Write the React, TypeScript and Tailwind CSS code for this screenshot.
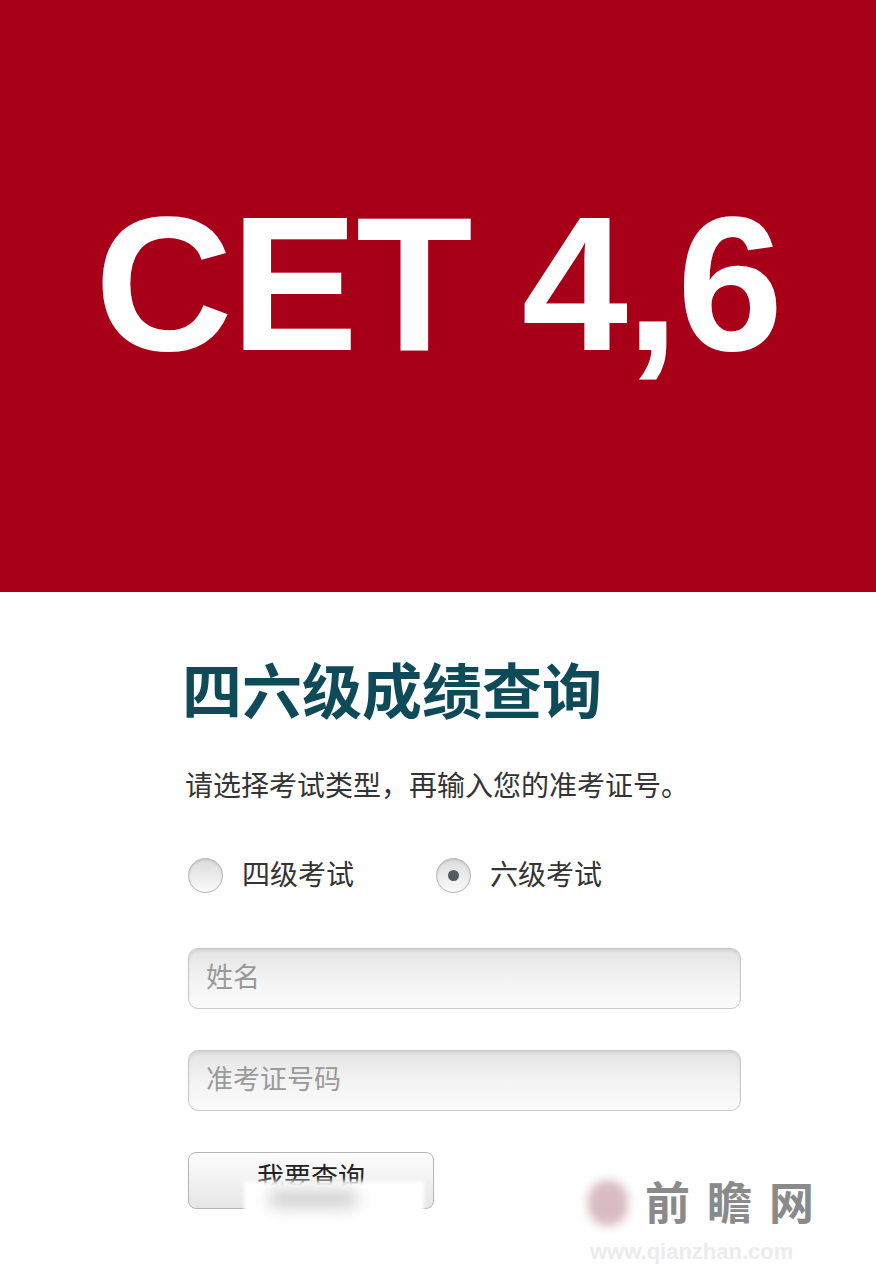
import React from "react";

const cjk = "font-['Liberation_Sans','Noto_Sans_CJK_SC',sans-serif]";

function Radio({ label, checked }: { label: string; checked?: boolean }) {
  return (
    <label className="flex items-center gap-[19px]">
      <span className="flex h-[35px] w-[35px] items-center justify-center rounded-full border border-[#b8b8b8] bg-gradient-to-b from-[#dcdcdc] to-[#fafafa] shadow-[inset_0_1px_2px_rgba(0,0,0,0.15)]">
        {checked && <span className="h-[11px] w-[11px] rounded-full bg-[#555a60]" />}
      </span>
      <span className="text-[28px] leading-none text-[#333]">{label}</span>
    </label>
  );
}

function Field({ placeholder }: { placeholder: string }) {
  return (
    <div className="flex h-[61px] w-[553px] items-center rounded-[10px] border border-[#c9c9c9] bg-gradient-to-b from-[#e4e4e4] via-[#f3f3f3] to-[#fbfbfb] px-[17px] shadow-[inset_0_2px_3px_rgba(0,0,0,0.08)]">
      <span className="text-[27px] leading-none text-[#9a9a9a]">{placeholder}</span>
    </div>
  );
}

export default function App() {
  return (
    <div className={`relative min-h-[1280px] w-[876px] overflow-hidden bg-white ${cjk}`}>
      <div className="flex h-[592px] items-center justify-center bg-[#a9001a] pb-[26px]">
        <div className="font-['Liberation_Sans',sans-serif] text-[191px] font-bold leading-none tracking-[-2px] text-white">
          CET 4,6
        </div>
      </div>

      <div className="flex flex-col pl-[182px] pt-[72px]">
        <h1 className="text-[60px] font-bold leading-none text-[#0f4a58]">四六级成绩查询</h1>
        <p className="mt-[49px] pl-[3px] text-[28px] leading-none text-[#333]">
          请选择考试类型，再输入您的准考证号。
        </p>
        <div className="mt-[57px] flex gap-[82px] pl-[6px]">
          <Radio label="四级考试" />
          <Radio label="六级考试" checked />
        </div>
        <div className="mt-[55px] flex flex-col gap-[41px] pl-[6px]">
          <Field placeholder="姓名" />
          <Field placeholder="准考证号码" />
        </div>
        <div className="mt-[41px] pl-[6px]">
          <button className="flex h-[57px] w-[246px] items-center justify-center rounded-[8px] border border-[#b5b5b5] bg-gradient-to-b from-[#fdfdfd] to-[#e6e6e6] pb-[4px] text-[27px] leading-none text-[#222]">
            我要查询
          </button>
        </div>
      </div>

      {/* watermark */}
      <div className="absolute left-[244px] top-[1181px] h-[36px] w-[180px] bg-white blur-[2px]" />
      <div className="absolute left-[268px] top-[1190px] h-[18px] w-[90px] rounded-full bg-[#b0b0b0]/60 blur-[8px]" />
      <div className="absolute left-[588px] top-[1180px] h-[46px] w-[40px] rounded-full bg-[#c9a0a6]/70 blur-[5px]" />
      <div className="absolute left-[645px] top-[1182px] flex flex-col">
        <div className="text-[45px] font-bold leading-none tracking-[17px] text-[#8a8a8a]">前瞻网</div>
        <div className="mt-[14px] -ml-[55px] font-['Liberation_Sans',sans-serif] text-[22px] font-bold leading-none text-[#ececec]">
          www.qianzhan.com
        </div>
      </div>
    </div>
  );
}
